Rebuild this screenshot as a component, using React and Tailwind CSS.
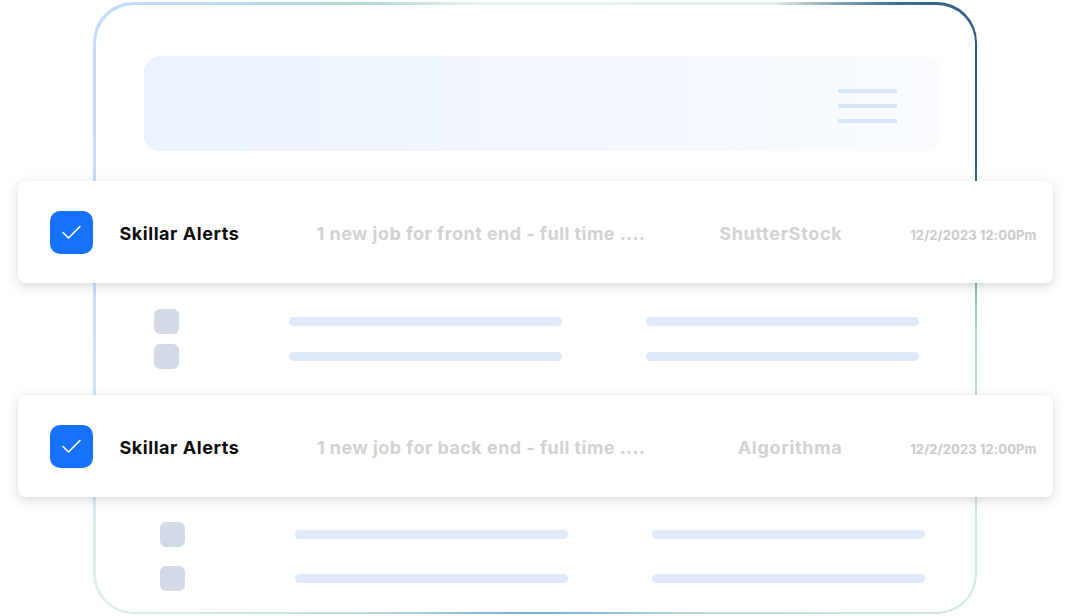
const font = { fontFamily: 'Inter, "Noto Sans", sans-serif' };

const CheckBox = () => (
  <div className="w-[43px] h-[43px] rounded-[10px] bg-[#1672fb] flex items-center justify-center shrink-0">
    <svg width="43" height="43" viewBox="0 0 43 43" fill="none">
      <polyline points="13,21.5 18.5,27 30,15.5" stroke="#ffffff" strokeWidth="1.6" strokeLinecap="round" strokeLinejoin="round" />
    </svg>
  </div>
);

const AlertCard = ({ job, company }) => (
  <div className="mx-[-78px] h-[102px] bg-white rounded-[8px] shadow-[0_3px_12px_rgba(0,0,0,0.16)] flex items-center pl-[32px] pr-[16px] relative">
    <CheckBox />
    <div className="ml-[27px] w-[170px] text-[18px] font-bold text-[#0b0b0b] tracking-[0.55px] mt-[2px]">Skillar Alerts</div>
    <div className="w-[356px] text-right text-[18px] font-bold text-[#d2d2d2] tracking-[0.45px] mt-[2px]">{job}</div>
    <div className="w-[197px] text-right text-[18px] font-bold text-[#d2d2d2] tracking-[0.7px] mt-[2px]">{company}</div>
    <div className="flex-1 text-right text-[13px] font-bold text-[#cacaca] tracking-[0.1px] mt-[8px]">12/2/2023 12:00Pm</div>
  </div>
);

const SkeletonRow = ({ left }) => (
  <div className={`flex items-center ${left}`}>
    <div className="w-[25px] h-[25px] rounded-[6px] bg-[#d3dae6] shrink-0" />
    <div className="ml-[110px] w-[273px] h-[9px] rounded-full bg-[#dfeafd]" />
    <div className="ml-[84px] w-[273px] h-[9px] rounded-full bg-[#dfeafd]" />
  </div>
);

export default function App() {
  return (
    <div className="w-[1070px] h-[616px] bg-white overflow-hidden pt-[2px] pl-[93px]" style={font}>
      <div className="w-[884px] h-[612px] rounded-[40px] p-[2.5px] bg-[image:conic-gradient(from_0deg,#eaf4ef_0deg,#e4eee8_38deg,#3f6d92_50deg,#2c5a8a_60deg,#2f5e8b_72deg,#a8d6d0_92deg,#d6ece4_118deg,#b8dcd8_150deg,#6aaee0_180deg,#b8dcd9_210deg,#dff0e8_236deg,#d0e6f5_258deg,#c5dcfb_280deg,#c4dcfb_305deg,#b0d8d8_330deg,#e8f3ee_350deg,#eaf4ef_360deg)]">
        <div className="w-full h-full rounded-[38px] bg-white pt-[51.5px] flex flex-col">
          <div className="ml-[48px] mr-[34px] h-[95px] rounded-[16px] bg-gradient-to-r from-[#eaf2fe] to-[#f9fbff] flex items-center justify-end pr-[44px]">
            <div className="flex flex-col gap-[11px] mt-[5px]">
              <div className="w-[59px] h-[4px] bg-[#d6e6fd]" />
              <div className="w-[59px] h-[4px] bg-[#d6e6fd]" />
              <div className="w-[59px] h-[4px] bg-[#d6e6fd]" />
            </div>
          </div>

          <div className="mt-[30px]">
            <AlertCard job="1 new job for front end - full time ...." company="ShutterStock" />
          </div>

          <div className="mt-[26px] flex flex-col gap-[10px]">
            <SkeletonRow left="pl-[58px]" />
            <SkeletonRow left="pl-[58px]" />
          </div>

          <div className="mt-[26px]">
            <AlertCard job="1 new job for back end - full time ...." company="Algorithma" />
          </div>

          <div className="mt-[25px] flex flex-col gap-[19px]">
            <SkeletonRow left="pl-[64px]" />
            <SkeletonRow left="pl-[64px]" />
          </div>
        </div>
      </div>
    </div>
  );
}
